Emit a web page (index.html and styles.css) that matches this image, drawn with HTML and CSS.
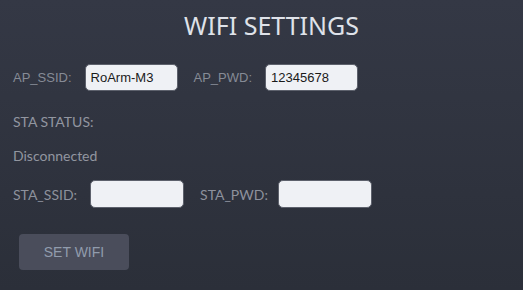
FILE: index.html
```html
<!DOCTYPE html>
<html>
<head>
<meta charset="utf-8">
<link rel="stylesheet" href="styles.css">
</head>
<body>
<div class="panel">
  <h1 class="title">WIFI SETTINGS</h1>
  <div class="row ap-row">
    <label class="lbl-arial">AP_SSID:</label>
    <input class="field" type="text" value="RoArm-M3">
    <label class="lbl-arial lbl-second">AP_PWD:</label>
    <input class="field" type="text" value="12345678">
  </div>
  <div class="status-label">STA STATUS:</div>
  <div class="status-value">Disconnected</div>
  <div class="row sta-row">
    <label class="lbl-sans">STA_SSID:</label>
    <input class="field field-sta" type="text" value="">
    <label class="lbl-sans lbl-second-sta">STA_PWD:</label>
    <input class="field field-sta" type="text" value="">
  </div>
  <button class="btn">SET WIFI</button>
</div>
</body>
</html>
```
FILE: styles.css
```css
html, body {
  margin: 0;
  padding: 0;
  height: 100%;
}
body {
  background: linear-gradient(180deg, #343845 0%, #2b2f39 100%);
  width: 523px;
  height: 290px;
  overflow: hidden;
}
.panel {
  padding: 0 13px;
}
.title {
  margin: 0;
  padding-top: 9px;
  padding-left: 20px;
  text-align: center;
  font-family: "Noto Sans", sans-serif;
  font-weight: 400;
  font-size: 25px;
  line-height: 32px;
  color: #dfe2e9;
}
.row {
  display: flex;
  align-items: center;
}
.ap-row {
  margin-top: 23px;
  height: 27px;
}
.lbl-arial {
  font-family: "Liberation Sans", Arial, sans-serif;
  font-size: 13px;
  color: #868b96;
  margin-right: 13px;
}
.lbl-second {
  margin-left: 16px;
  margin-right: 13px;
}
.lbl-sans {
  font-family: Lato, sans-serif;
  font-size: 14px;
  color: #8d919c;
  margin-right: 13px;
}
.lbl-second-sta {
  margin-left: 16px;
  margin-right: 10px;
}
.field {
  box-sizing: border-box;
  flex: 0 0 auto;
  width: 93px;
  height: 27px;
  border: 1px solid #5d616c;
  border-radius: 5px;
  background: #eff1f5;
  padding: 0 5px;
  font-family: "Liberation Sans", Arial, sans-serif;
  font-size: 13px;
  color: #1a1a1a;
  outline: none;
}
.field-sta {
  width: 94px;
  height: 28px;
}
.status-label, .status-value {
  font-family: Lato, sans-serif;
  font-size: 14px;
  color: #9296a0;
  line-height: 18px;
}
.status-label {
  margin-top: 22px;
}
.status-value {
  margin-top: 16px;
}
.sta-row {
  margin-top: 15px;
  height: 28px;
}
.btn {
  display: block;
  margin: 26px 0 0 6px;
  width: 110px;
  height: 36px;
  border: none;
  border-radius: 4px;
  background: #4a4d5b;
  color: #919cad;
  font-family: "Liberation Sans", Arial, sans-serif;
  font-size: 14px;
}
```
